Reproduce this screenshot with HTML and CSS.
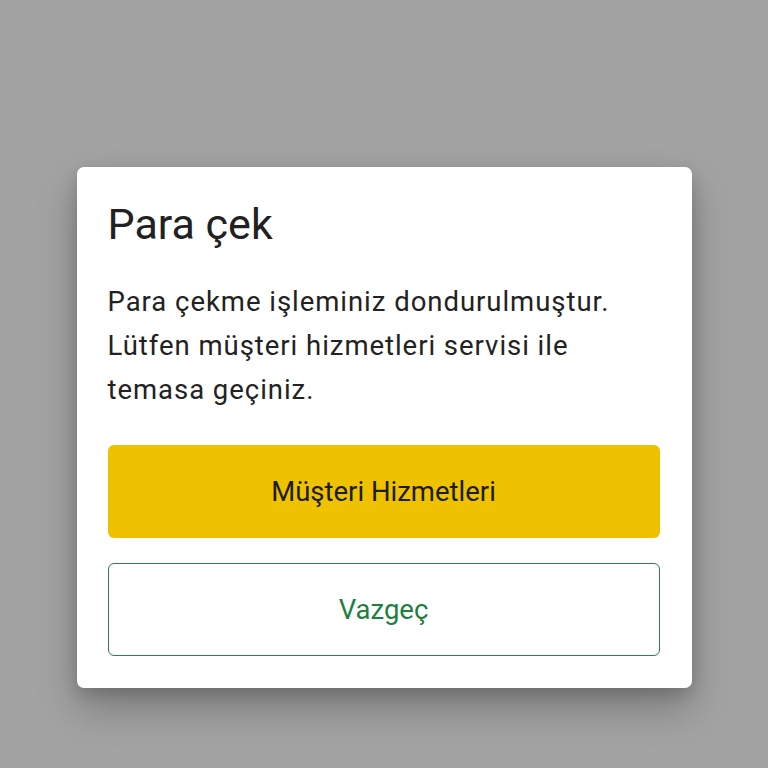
FILE: index.html
```html
<!DOCTYPE html>
<html lang="tr">
<head>
  <meta charset="UTF-8">
  <meta name="viewport" content="width=device-width, initial-scale=1.0">
  <title>Para çek</title>
  <link rel="stylesheet" href="styles.css">
</head>
<body>

<div class="overlay">
  <div class="dialog">
    <h2 class="dialog-title">Para çek</h2>
    <p class="dialog-text">Para çekme işleminiz dondurulmuştur. Lütfen müşteri hizmetleri servisi ile temasa geçiniz.</p>
    <div class="actions">
      <button class="btn btn-primary">Müşteri Hizmetleri</button>
      <button class="btn btn-outline">Vazgeç</button>
    </div>
  </div>
</div>

</body>
</html>
```

FILE: styles.css
```css
html, body {
  margin: 0;
  padding: 0;
  height: 100%;
}
body {
  font-family: Roboto, "Noto Sans", Arial, sans-serif;
  background-color: #a3a3a3;
}
.overlay {
  height: 768px;
  display: flex;
  justify-content: center;
  align-items: flex-start;
  padding-top: 167px;
  box-sizing: border-box;
}
.dialog {
  width: 615px;
  box-sizing: border-box;
  background-color: #fff;
  border-radius: 7px;
  padding: 32px 32px 32px 31px;
  box-shadow: 0 20px 40px rgba(0, 0, 0, 0.25), 0 6px 16px rgba(0, 0, 0, 0.15);
}
.dialog-title {
  margin: 0;
  font-size: 43px;
  font-weight: 400;
  line-height: 50px;
  color: #212121;
}
.dialog-text {
  margin: 31px 0 0;
  font-size: 27.5px;
  letter-spacing: 0.035em;
  line-height: 44px;
  color: #222;
}
.actions {
  margin-top: 33px;
  display: flex;
  flex-direction: column;
  gap: 25px;
}
.btn {
  display: block;
  width: 100%;
  height: 93px;
  font-family: inherit;
  font-size: 27.5px;
  border-radius: 6px;
  cursor: pointer;
}
.btn-primary {
  background-color: #efc200;
  color: #1c1c1c;
  border: none;
}
.btn-outline {
  background-color: #fff;
  color: #1f7f40;
  border: 1.5px solid #2e7d4f;
}
```
